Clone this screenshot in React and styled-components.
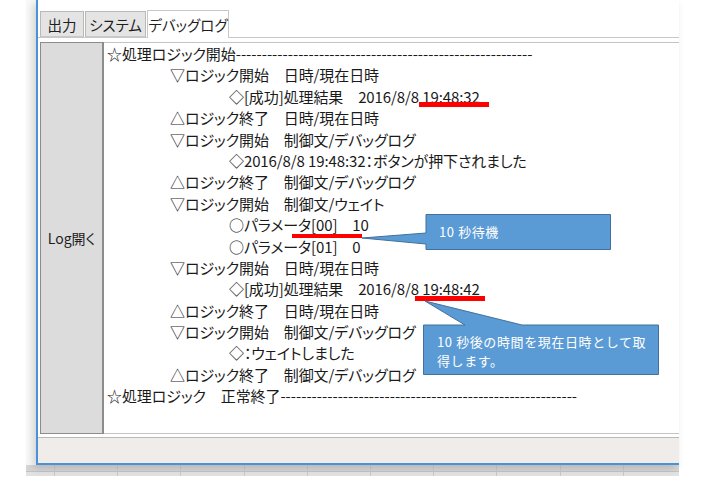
import React from "react"
import styled, { createGlobalStyle } from "styled-components"

const GlobalStyle = createGlobalStyle`
  html, body {
    margin: 0;
    padding: 0;
    background: #ffffff;
  }
  body {
    font-family: "Noto Sans CJK JP", "Noto Sans", sans-serif;
  }
`

// Spreadsheet behind the window
const Sheet = styled.div`
  margin-left: 26px;
  width: 653px;
  height: 476px;
  position: relative;
  background-color: #f9f9f9;
  background-image:
    repeating-linear-gradient(to right, transparent 0, transparent 28px, #c9c9c9 28px, #c9c9c9 29px, transparent 29px, transparent 63.2px),
    linear-gradient(to bottom, #f9f9f9 0, #f9f9f9 465px, #d6d6d6 465px, #d6d6d6 471px, #c4c4c4 471px, #c4c4c4 472px, #e2e2e2 472px);
`

const Window = styled.div`
  margin-left: 10px;
  width: 643px;
  height: 465px;
  box-sizing: border-box;
  background: #ffffff;
  border-left: 2px solid #4a92d8;
  border-bottom: 2px solid #4a92d8;
  box-shadow: -3px 3px 8px rgba(0, 0, 0, 0.16);
  display: flex;
  flex-direction: column;
  padding-top: 9px;
`

const TabRow = styled.div`
  display: flex;
  align-items: flex-end;
  padding-left: 2px;
  height: 28px;
  position: relative;
  z-index: 1;
`

const Tab = styled.div`
  box-sizing: border-box;
  width: ${p => p.$w}px;
  height: ${p => (p.$active ? 28 : 26)}px;
  margin-bottom: ${p => (p.$active ? -1 : 0)}px;
  margin-right: 1px;
  display: flex;
  align-items: center;
  justify-content: center;
  font-size: 14.5px;
  font-feature-settings: "palt";
  color: #1e1e1e;
  background: ${p => (p.$active ? "#ffffff" : "#e4e4e4")};
  border: 1px solid ${p => (p.$active ? "#c8c8c8" : "#b9b9b9")};
  border-bottom: ${p => (p.$active ? "none" : "1px solid #c8c8c8")};
`

const TabPanel = styled.div`
  height: 401px;
  box-sizing: border-box;
  border-top: 1px solid #c8c8c8;
  border-bottom: 1px solid #b8b8b8;
  padding: 4px 0 3px 2px;
  display: flex;
  background: #ffffff;
`

const OpenButton = styled.div`
  box-sizing: border-box;
  width: 64px;
  flex: none;
  background: #dcdcdc;
  border: 1px solid #8c8c8c;
  border-right-width: 2px;
  display: flex;
  align-items: center;
  justify-content: center;
  font-size: 14px;
  color: #1e1e1e;
  font-feature-settings: "palt";
`

const LogArea = styled.div`
  flex: 1;
  position: relative;
  border-top: 1px solid #c4c4c4;
  border-bottom: 1px solid #c4c4c4;
  padding: 0 0 0 3px;
  overflow: hidden;
`

const LogLine = styled.div`
  height: 21.4px;
  line-height: 21.4px;
  padding-left: ${p => [0, 63, 122][p.$level]}px;
  font-size: 15px;
  font-feature-settings: "palt";
  letter-spacing: -0.1px;
  color: #1a1a1a;
  white-space: nowrap;
`

const Dashes = styled.span`
  letter-spacing: 0;
`

const Underline = styled.div`
  position: absolute;
  left: ${p => p.$x}px;
  top: ${p => p.$y}px;
  width: 70px;
  height: ${p => p.$h}px;
  background: #ff0000;
`

const Callout = styled.div`
  position: absolute;
  left: ${p => p.$x}px;
  top: ${p => p.$y}px;
  width: ${p => p.$w}px;
  height: ${p => p.$h}px;
`

const CalloutShape = styled.svg`
  position: absolute;
  left: 0;
  top: 0;
  overflow: visible;
`

const CalloutText = styled.div`
  position: absolute;
  left: ${p => p.$x}px;
  top: ${p => p.$y}px;
  font-size: 13px;
  line-height: 19px;
  letter-spacing: 0.6px;
  color: #ffffff;
  white-space: nowrap;
`

const BottomBar = styled.div`
  flex: 1;
  background: #efecea;
`

const LOG = [
  { level: 0, text: "☆処理ロジック開始", dashes: 57 },
  { level: 1, text: "▽ロジック開始　日時/現在日時" },
  { level: 2, text: "◇[成功]処理結果　2016/8/8 19:48:32" },
  { level: 1, text: "△ロジック終了　日時/現在日時" },
  { level: 1, text: "▽ロジック開始　制御文/デバッグログ" },
  { level: 2, text: "◇2016/8/8 19:48:32：ボタンが押下されました" },
  { level: 1, text: "△ロジック終了　制御文/デバッグログ" },
  { level: 1, text: "▽ロジック開始　制御文/ウェイト" },
  { level: 2, text: "○パラメータ[00]　10" },
  { level: 2, text: "○パラメータ[01]　0" },
  { level: 1, text: "▽ロジック開始　日時/現在日時" },
  { level: 2, text: "◇[成功]処理結果　2016/8/8 19:48:42" },
  { level: 1, text: "△ロジック終了　日時/現在日時" },
  { level: 1, text: "▽ロジック開始　制御文/デバッグログ" },
  { level: 2, text: "◇：ウェイトしました" },
  { level: 1, text: "△ロジック終了　制御文/デバッグログ" },
  { level: 0, text: "☆処理ロジック　正常終了", dashes: 57 },
]

const TABS = [
  { label: "出力", w: 44 },
  { label: "システム", w: 61 },
  { label: "デバッグログ", w: 82, active: true },
]

const App = () => {
  return (
    <>
      <GlobalStyle />
      <Sheet>
        <Window>
          <TabRow>
            {TABS.map(t => (
              <Tab key={t.label} $w={t.w} $active={t.active}>
                {t.label}
              </Tab>
            ))}
          </TabRow>
          <TabPanel>
            <OpenButton>Log開く</OpenButton>
            <LogArea>
              {LOG.map((l, i) => (
                <LogLine key={i} $level={l.level}>
                  {l.text}
                  {l.dashes && <Dashes>{"-".repeat(l.dashes)}</Dashes>}
                </LogLine>
              ))}

              <Underline $x={315} $y={59} $h={5} />
              <Underline $x={188} $y={191} $h={4} />
              <Underline $x={311} $y={253} $h={5} />

              {/* 10秒待機 */}
              <Callout $x={258} $y={171} $w={249} $h={36}>
                <CalloutShape width="249" height="36" viewBox="0 0 249 36">
                  <path d="M64 0.5 H248.5 V35.5 H64 V30 L0 24 L64 19 Z" fill="#5b9bd5" stroke="#41719c" strokeWidth="1" />
                </CalloutShape>
                <CalloutText $x={77} $y={8}>10 秒待機</CalloutText>
              </Callout>

              {/* 10秒後 */}
              <Callout $x={319} $y={258} $w={236} $h={74}>
                <CalloutShape width="236" height="74" viewBox="0 0 236 74">
                  <path d="M0.5 24 H42 L2 0 L99 24 H235.5 V73.5 H0.5 Z" fill="#5b9bd5" stroke="#41719c" strokeWidth="1" />
                </CalloutShape>
                <CalloutText $x={14} $y={31}>
                  10 秒後の時間を現在日時として取
                  <br />
                  得します。
                </CalloutText>
              </Callout>
            </LogArea>
          </TabPanel>
          <BottomBar />
        </Window>
      </Sheet>
    </>
  )
}

export default App
